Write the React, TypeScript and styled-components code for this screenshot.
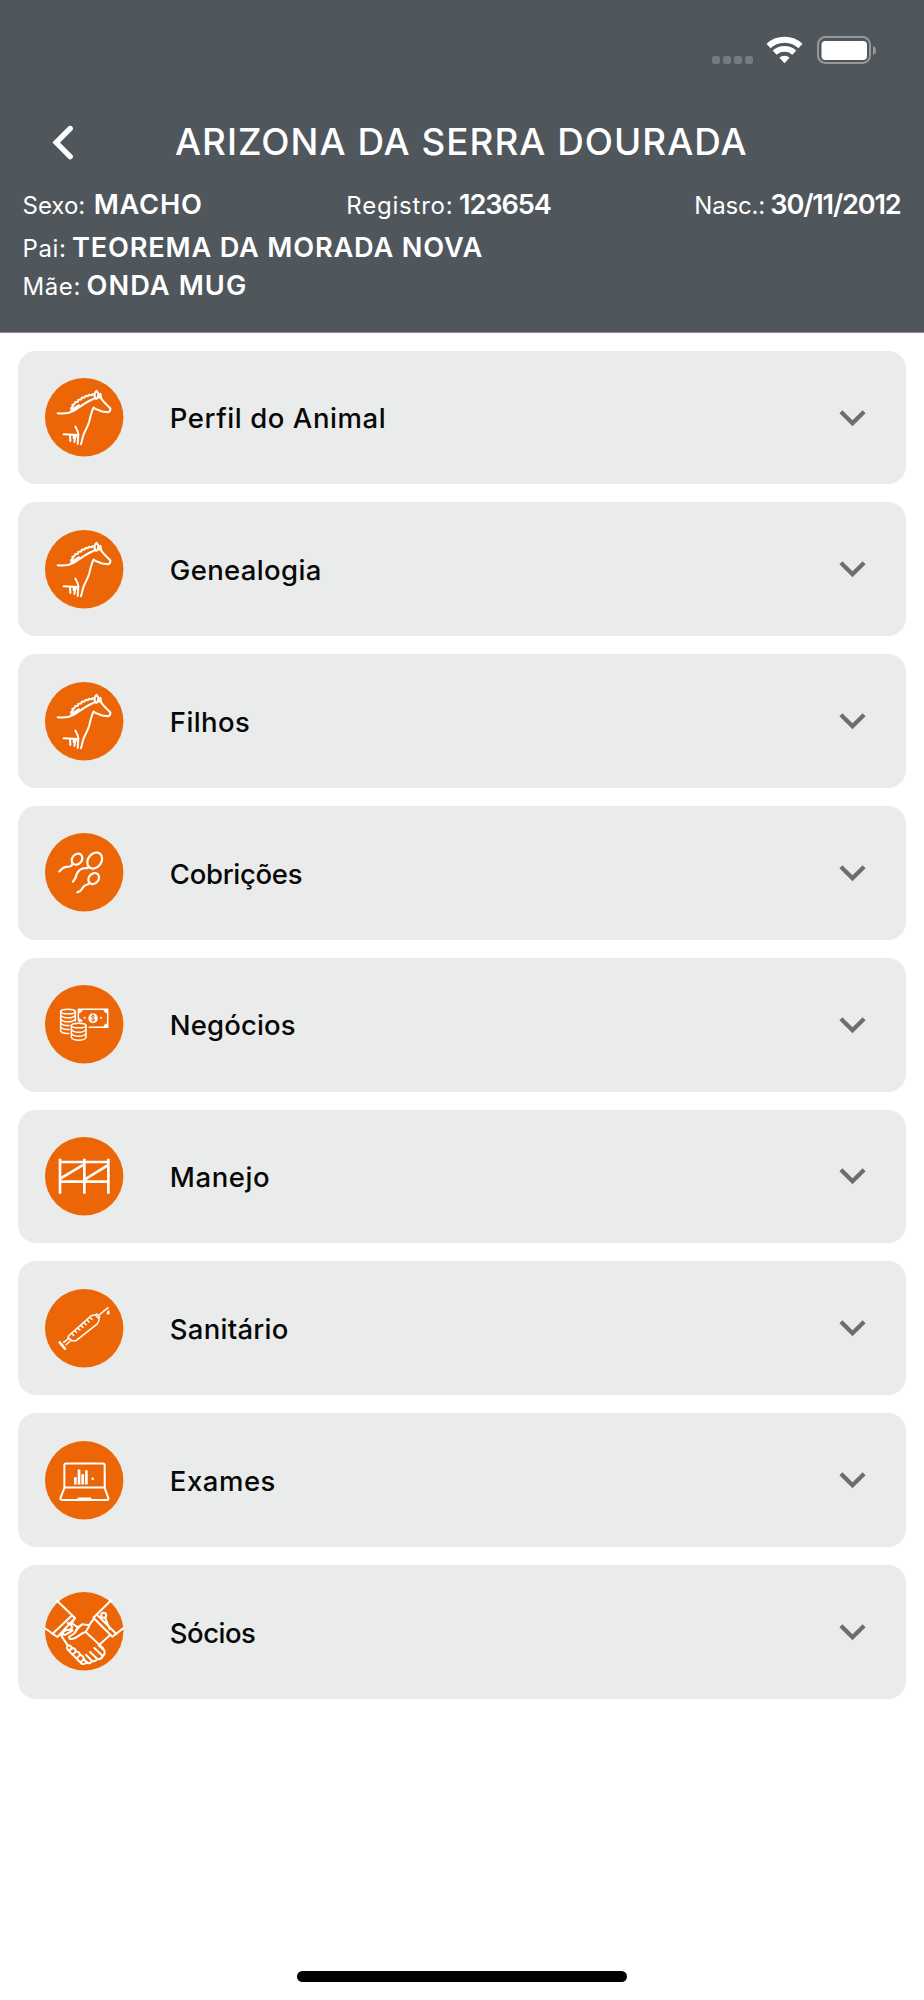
import React from 'react';
import styled, { createGlobalStyle } from 'styled-components';

const GlobalStyle = createGlobalStyle`
  * { box-sizing: border-box; }
  body { margin: 0; background: #fff; }
`;

const Screen = styled.div`
  width: 924px;
  height: 2000px;
  display: flex;
  flex-direction: column;
  background: #fff;
  font-family: Inter, 'Liberation Sans', sans-serif;
  overflow: hidden;
`;

const Header = styled.header`
  height: 333px;
  flex: none;
  display: flex;
  flex-direction: column;
  background: #4f565c;
  border-bottom: 1px solid #8b8f93;
  color: #fff;
`;

const StatusBar = styled.div`
  height: 100px;
  flex: none;
  display: flex;
  justify-content: flex-end;
  align-items: flex-start;
  padding: 36px 48px 0 0;
`;

const SignalDots = styled.div`
  display: flex;
  gap: 3.1px;
  padding-top: 20px;
  margin-right: 13px;
`;

const SignalDot = styled.span`
  width: 8px;
  height: 8px;
  border-radius: 2.5px;
  background: #777a83;
`;

const WifiSvg = styled.svg`
  width: 37px;
  height: 28px;
  margin-right: 13px;
`;

const BatterySvg = styled.svg`
  width: 60px;
  height: 28px;
`;

const TitleRow = styled.div`
  height: 84px;
  flex: none;
  display: grid;
  grid-template-columns: 175px 1fr 174px;
  align-items: center;
`;

const BackButton = styled.button`
  margin: 2px 0 0 50px;
  width: 26px;
  height: 38px;
  padding: 0;
  border: 0;
  background: none;
  display: block;
`;

const Title = styled.h1`
  margin: 0;
  font-size: 36.8px;
  line-height: 44px;
  font-weight: 500;
  letter-spacing: 1.02px;
  white-space: nowrap;
`;

const Facts = styled.div`
  display: flex;
  flex-direction: column;
  padding: 1px 23.5px 0 22.5px;
`;

const FactRow = styled.div<{ $height: number }>`
  height: ${(p) => p.$height}px;
  display: flex;
  justify-content: space-between;
  align-items: flex-start;
`;

const Fact = styled.div<{ $gap?: number }>`
  display: flex;
  align-items: baseline;
  gap: ${(p) => p.$gap ?? 5.5}px;
  line-height: 40px;
  white-space: nowrap;
`;

const Label = styled.span<{ $track?: number }>`
  font-size: 24px;
  font-weight: 400;
  letter-spacing: ${(p) => p.$track ?? 0}px;
`;

const Value = styled.span<{ $track?: number }>`
  font-size: 27.2px;
  font-weight: 600;
  letter-spacing: ${(p) => p.$track ?? 0}px;
`;

const List = styled.main`
  flex: 1;
  display: flex;
  flex-direction: column;
  gap: 18.1px;
  padding: 17.7px 18px 0;
`;

const Card = styled.section`
  height: 133.7px;
  flex: none;
  display: flex;
  align-items: center;
  padding: 0 40px 0 26.8px;
  border-radius: 18px;
  background: #eaeceb;
`;

const CardIcon = styled.svg`
  width: 78.4px;
  height: 78.4px;
  flex: none;
  margin: 0 46.6px 0.4px 0;
  overflow: visible;
  fill: none;
  stroke: #fff;
  stroke-width: 6.5;
  stroke-linecap: round;
  stroke-linejoin: round;
`;

const CardTitle = styled.h2<{ $track: number }>`
  flex: 1;
  margin: 1.5px 0 0;
  font-size: 27.5px;
  line-height: 34px;
  font-weight: 500;
  color: #080808;
  letter-spacing: ${(p) => p.$track}px;
`;

const Chevron = styled.svg`
  width: 27px;
  height: 17px;
  flex: none;
  margin-top: 1px;
`;

const Footer = styled.footer`
  height: 29px;
  flex: none;
  display: flex;
  justify-content: center;
`;

const HomeIndicator = styled.div`
  width: 330px;
  height: 11px;
  border-radius: 6px;
  background: #000;
`;

const Disc = ({ cy }: { cy: number }) => (
  <circle cx="143.5" cy={cy} r="117.5" fill="#ec6608" stroke="none" />
);

const HorseIcon = () => (
  <CardIcon viewBox="26 24.5 235 235">
    <Disc cy={142} />
    <path
      strokeWidth="6"
      d="M64 130C82 133 99 130 112 123C129 113 151 94 174 86M103 126L108 117L104 116L110 109L108 106L116 101L116 97L124 96L126 90L134 89L137 83L145 83L148 78L155 79L158 75L165 76L170 73L175 77M110 118L128 106M176 84C173 74 176 67 181 63C186 68 188 75 183 84L179 87M189 84L188 76L192 72L195 87C203 98 213 106 222 116C223 121 220 126 215 127L197 125L182 119C176 118 175 115 172 113C165 124 162 142 158 157C153 173 144 185 140 199L134 223M117 170C121 178 125 184 126 192L124 222M82 193L123 195M101 196L102 213M112 197V205M119 196L114 216"
    />
  </CardIcon>
);

const BreedingIcon = () => (
  <CardIcon viewBox="26 22.5 235 235">
    <Disc cy={140} />
    <ellipse cx="175" cy="105" rx="20" ry="26" transform="rotate(37 175 105)" />
    <ellipse cx="122" cy="101" rx="14.5" ry="18" transform="rotate(40 122 101)" />
    <ellipse cx="172" cy="159" rx="14.5" ry="18" transform="rotate(40 172 159)" />
    <path d="M109 114L105 121C93 127 86 121 78 129L69 138M159 124L153 128C136 126 126 134 121 146L117 158L110 168M158 172L154 177C143 178 141 184 137 190C134 196 129 199 123 200" />
  </CardIcon>
);

const MoneyIcon = () => (
  <CardIcon viewBox="26 22.5 235 235">
    <Disc cy={140} />
    <g strokeWidth="4.5">
      <ellipse cx="95" cy="102" rx="22" ry="7" />
      <path d="M73 102V161Q79 168 97 168M117 102V130M73 112Q78 121 95 121T117 112M73 124Q78 133 95 133T116 125M73 136Q78 145 98 144M73 148Q79 157 98 156" />
      <ellipse cx="127" cy="144" rx="22" ry="7" />
      <path d="M105 144V180Q109 188 127 188T149 180V144M105 155Q109 164 127 164T149 155M105 167Q109 176 127 176T149 167" />
      <path strokeLinecap="butt" d="M126 128V95H214V149H157" />
    </g>
    <g fill="#fff" stroke="none">
      <path d="M126 95H139Q138 106 126 107ZM214 95H201Q202 106 214 107ZM214 149H201Q202 138 214 137ZM126 123Q137 123 139 132L126 134Z" />
      <ellipse cx="170" cy="122" rx="14" ry="15" />
      <circle cx="145" cy="121" r="3" />
      <circle cx="194" cy="121" r="3" />
    </g>
    <path
      stroke="#ec6608"
      strokeWidth="2.8"
      d="M175 116Q170 111 165 116Q166 121 170 122Q176 124 175 128Q170 133 165 127M170 109V134"
    />
  </CardIcon>
);

const FenceIcon = () => (
  <CardIcon viewBox="26 22 235 235">
    <Disc cy={139.5} />
    <g strokeLinecap="butt" strokeWidth="8">
      <path d="M71 87V192M144 87V192M216 87V192M71 97H216M71 156H216" />
      <path d="M74 145L142 105M147 148L215 106" />
    </g>
  </CardIcon>
);

const SyringeIcon = () => (
  <CardIcon viewBox="26 21 235 235">
    <Disc cy={138.5} />
    <g strokeWidth="4.5">
      <path d="M97 161L156 109Q166 97 176 99L188 110Q188 120 181 127L119 176H106L95 166ZM176 99L181 96L190 104L187 110M188 99L215 77" />
      <path d="M97 169L82 181M105 174L89 188M106 155L112 160M116 147L121 151M125 139L131 144M134 131L140 136M144 123L149 128M153 115L158 120M162 108L167 112" />
    </g>
    <path strokeWidth="7.5" d="M70 181L86 200" />
    <path fill="#fff" stroke="none" d="M217 83Q224 96 215 98Q206 95 217 83Z" />
  </CardIcon>
);

const LaptopIcon = () => (
  <CardIcon viewBox="26 19.5 235 235">
    <Disc cy={137} />
    <g strokeWidth="6">
      <path d="M84 159V93Q84 87 90 87H199Q205 87 205 93V159ZM84 161L72 191Q71 195 77 196H211Q217 196 216 191L205 161" />
      <path d="M126 192H162" />
    </g>
    <g strokeLinecap="butt" strokeWidth="8">
      <path d="M117 128V150M128 105V150M139 119V150M150 107V150" />
    </g>
    <circle cx="169" cy="133" r="4" fill="#fff" stroke="none" />
  </CardIcon>
);

const HandshakeIcon = () => (
  <CardIcon viewBox="26 19 235 235">
    <Disc cy={136.5} />
    <g strokeWidth="6">
      <path d="M62 45L116 97L63 154L28 129M105 91L48 145M226 42L171 96L228 153L260 128M182 87L240 145" />
      <circle cx="202" cy="89" r="7.5" />
      <path d="M206 96L220 130" />
      <path d="M116 97L106 112L124 125L137 116L158 119L171 101M137 116Q121 128 115 142L98 154Q99 161 107 160C125 158 132 141 148 139L158 122M148 139L201 188M73 147L94 179M76 145Q87 149 91 145L109 134M94 112Q108 117 107 127Q103 134 91 133M91 133Q80 136 76 146" />
      <path d="M94 179Q89 186 96 194L136 234Q144 237 153 229M94 179Q102 178 107 187L99 195M107 187Q117 187 119 197L109 207M119 197Q130 198 131 208L121 218M131 208Q142 210 142 220L133 230M142 220L153 232Q162 235 167 226L149 207M167 226Q177 229 183 220L161 199M183 220Q195 222 199 211L174 187M199 211Q207 206 204 194L187 179L221 148" />
    </g>
  </CardIcon>
);

const sections = [
  { title: 'Perfil do Animal', track: 0.57, Icon: HorseIcon },
  { title: 'Genealogia', track: 0.35, Icon: HorseIcon },
  { title: 'Filhos', track: 0.4, Icon: HorseIcon },
  { title: 'Cobrições', track: -0.3, Icon: BreedingIcon },
  { title: 'Negócios', track: 0.15, Icon: MoneyIcon },
  { title: 'Manejo', track: 0.6, Icon: FenceIcon },
  { title: 'Sanitário', track: 0.25, Icon: SyringeIcon },
  { title: 'Exames', track: 0.55, Icon: LaptopIcon },
  { title: 'Sócios', track: -0.5, Icon: HandshakeIcon },
];

export default function App() {
  return (
    <Screen>
      <GlobalStyle />
      <Header>
        <StatusBar>
          <SignalDots>
            <SignalDot />
            <SignalDot />
            <SignalDot />
            <SignalDot />
          </SignalDots>
          <WifiSvg viewBox="0 0 111 84" fill="none" stroke="#fff">
            <clipPath id="wifi-wedge">
              <path d="M55.5 82L-8 13V-10H119V13Z" />
            </clipPath>
            <g clipPath="url(#wifi-wedge)">
              <circle cx="55.5" cy="82" r="71" strokeWidth="18" />
              <circle cx="55.5" cy="82" r="43.5" strokeWidth="17" />
              <circle cx="55.5" cy="82" r="23" fill="#fff" stroke="none" />
            </g>
          </WifiSvg>
          <BatterySvg viewBox="0 0 60 28">
            <rect x="2" y="1" width="52" height="26" rx="7.5" fill="none" stroke="#95999c" strokeWidth="2" />
            <rect x="5.5" y="5" width="45.5" height="19" rx="4" fill="#fff" />
            <path d="M57 10Q60 11 60 14.5T57 19Z" fill="#95999c" />
          </BatterySvg>
        </StatusBar>
        <TitleRow>
          <BackButton aria-label="Voltar">
            <svg width="26" height="38" viewBox="0 0 26 38" fill="none" stroke="#fff" strokeWidth="5.4" strokeLinecap="round" strokeLinejoin="miter">
              <path d="M20.2 4.5L6.2 18.6L20.2 32.7" />
            </svg>
          </BackButton>
          <Title>ARIZONA DA SERRA DOURADA</Title>
        </TitleRow>
        <Facts>
          <FactRow $height={43}>
            <Fact $gap={8.5}>
              <Label $track={0}>Sexo:</Label>
              <Value $track={0.8}>MACHO</Value>
            </Fact>
            <Fact>
              <Label $track={0.8}>Registro:</Label>
              <Value $track={-1.1}>123654</Value>
            </Fact>
            <Fact>
              <Label $track={-0.2}>Nasc.:</Label>
              <Value $track={-1.2}>30/11/2012</Value>
            </Fact>
          </FactRow>
          <FactRow $height={38}>
            <Fact>
              <Label $track={0.6}>Pai:</Label>
              <Value $track={0.82}>TEOREMA DA MORADA NOVA</Value>
            </Fact>
          </FactRow>
          <FactRow $height={40}>
            <Fact>
              <Label $track={0.6}>Mãe:</Label>
              <Value $track={1.1}>ONDA MUG</Value>
            </Fact>
          </FactRow>
        </Facts>
      </Header>
      <List>
        {sections.map(({ title, track, Icon }) => (
          <Card key={title}>
            <Icon />
            <CardTitle $track={track}>{title}</CardTitle>
            <Chevron viewBox="0 0 27 17" fill="none" stroke="#6e6e6e" strokeWidth="4.3">
              <path d="M1.9 1.8L13.5 13.2L25.1 1.8" />
            </Chevron>
          </Card>
        ))}
      </List>
      <Footer>
        <HomeIndicator />
      </Footer>
    </Screen>
  );
}
